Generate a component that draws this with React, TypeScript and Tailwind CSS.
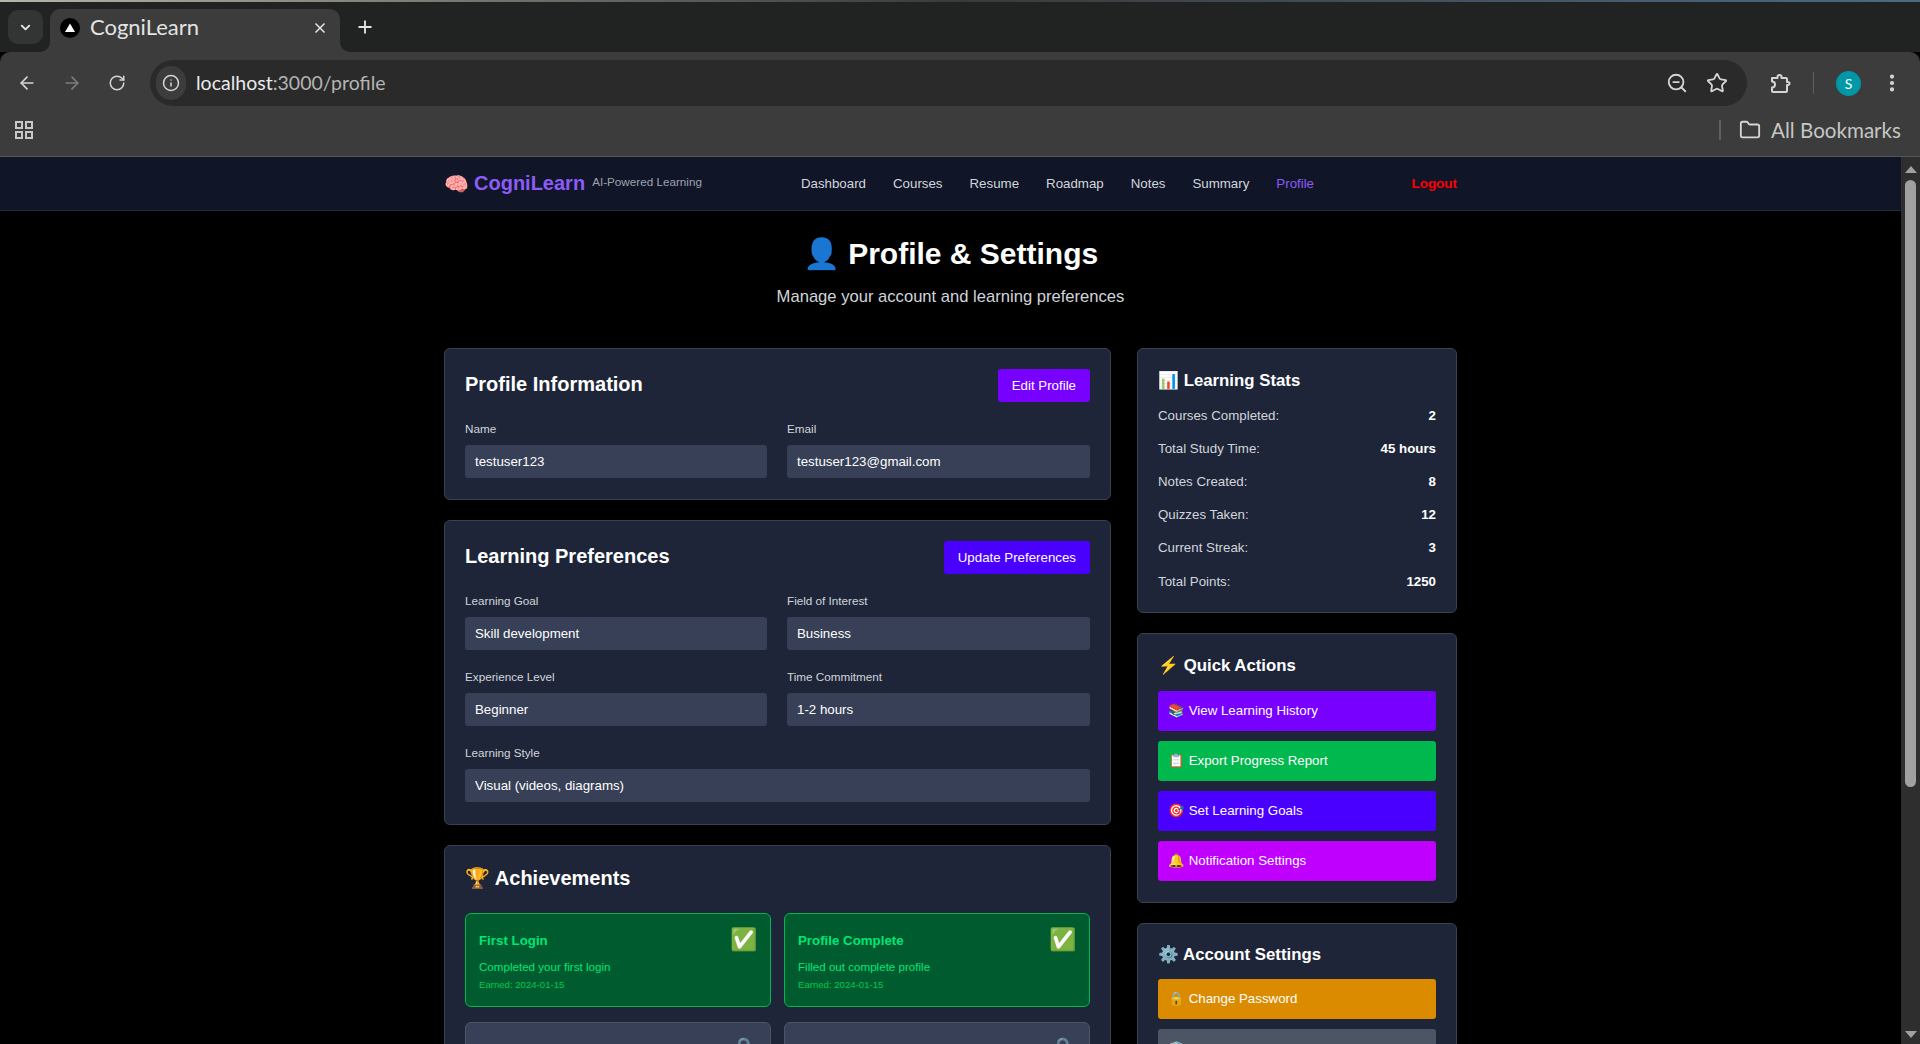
import React from 'react';
import { ArrowLeft, ArrowRight, RotateCw, Info, ZoomOut, Star, MoreVertical, Folder, X, Plus, ChevronDown } from 'lucide-react';

const navLinks = ['Dashboard', 'Courses', 'Resume', 'Roadmap', 'Notes', 'Summary'];

const stats = [
  ['Courses Completed:', '2'],
  ['Total Study Time:', '45 hours'],
  ['Notes Created:', '8'],
  ['Quizzes Taken:', '12'],
  ['Current Streak:', '3'],
  ['Total Points:', '1250'],
];

const Field = ({ label, value }: { label: string; value: string }) => (
  <div>
    <div className="mb-[10px] text-[11.7px] leading-[13px] text-[#d1d5db]">{label}</div>
    <div className="flex h-[33px] items-center rounded-[3px] bg-[#374056] px-[10px] text-[13.3px] text-white">{value}</div>
  </div>
);

const Achievement = ({ title, text, earned }: { title: string; text: string; earned: string }) => (
  <div className="h-[94px] rounded-[6px] border border-[#00b84d] bg-[#005c2e] px-[13px] pt-[13px]">
    <div className="flex items-start justify-between">
      <div className="mt-[4px] text-[13.3px] font-bold text-[#00e676]">{title}</div>
      <span className="mt-[1px] text-[22px] leading-[24px]">✅</span>
    </div>
    <div className="mt-[6px] text-[11.6px] text-[#00e676]">{text}</div>
    <div className="mt-[3px] text-[9.6px] text-[#00c853]">{earned}</div>
  </div>
);

const Locked = ({ title }: { title: string }) => (
  <div className="h-[94px] rounded-[6px] border border-[#4b5563] bg-[#374056] px-[13px] pt-[13px]">
    <div className="flex items-start justify-between">
      <div className="mt-[3px] text-[13.3px] font-bold text-[#9ca3af]">{title}</div>
      <span className="mt-[1px] text-[22px] leading-[24px] opacity-60">🔒</span>
    </div>
  </div>
);

const ActionButton = ({ label, color }: { label: string; color: string }) => (
  <div className={`flex h-[40px] items-center rounded-[3px] px-[10px] text-[13.3px] text-white ${color}`}>{label}</div>
);

const Card = ({ children, className }: { children: React.ReactNode; className?: string }) => (
  <div className={`rounded-[6px] border border-[#374151] bg-[#1e2538] px-[20px] ${className ?? ''}`}>{children}</div>
);

export default function App() {
  return (
    <div className="flex h-[1044px] flex-col overflow-hidden bg-black font-['Liberation_Sans',sans-serif]">
      {/* browser chrome */}
      <div className="h-[2px] bg-gradient-to-r from-[#b5b5a8] via-[#3a3a3a] to-[#4a6a85]" />
      <div className="flex h-[50px] items-start bg-[#202322] pl-[8px]">
        <div className="mt-[8px] flex h-[34px] w-[35px] items-center justify-center rounded-[10px] bg-[#333534] text-[#e5e5e5]">
          <ChevronDown size={15} strokeWidth={3} />
        </div>
        <div className="relative ml-[7px] mt-[7px] flex h-[43px] w-[290px] items-center rounded-t-[10px] bg-[#3c3c3c] pb-[6px] pl-[10px] pr-[12px] text-[#e3e3e3]">
          <svg width="10" height="10" viewBox="0 0 10 10" className="absolute -left-[10px] bottom-0">
            <path d="M10 0 V10 H0 A10 10 0 0 0 10 0 Z" fill="#3c3c3c" />
          </svg>
          <svg width="10" height="10" viewBox="0 0 10 10" className="absolute -right-[10px] bottom-0">
            <path d="M0 0 V10 H10 A10 10 0 0 1 0 0 Z" fill="#3c3c3c" />
          </svg>
          <svg width="20" height="20" viewBox="0 0 20 20" className="mr-[10px] shrink-0">
            <circle cx="10" cy="10" r="10" fill="#000" />
            <path d="M10 5.5 L15 14 H5 Z" fill="#fff" />
          </svg>
          <span className="-mt-[3px] font-['Lato',sans-serif] text-[22px]">CogniLearn</span>
          <X size={16} strokeWidth={2.5} className="ml-auto" />
        </div>
        <Plus size={20} strokeWidth={2.2} className="ml-[15px] mt-[15px] text-[#e3e3e3]" />
      </div>
      <div className="flex h-[62px] items-center rounded-t-[10px] bg-[#3c3c3c] pl-[17px] pr-[17px] text-[#d5d5d5]">
        <ArrowLeft size={20} />
        <ArrowRight size={20} className="ml-[25px] text-[#7c7c7c]" />
        <RotateCw size={18} className="ml-[26px]" />
        <div className="ml-[24px] flex h-[46px] flex-1 items-center rounded-full bg-[#2a2a2a] pl-[6px] pr-[19px]">
          <div className="flex h-[34px] w-[30px] items-center justify-center rounded-full bg-[#3c3c3c]">
            <Info size={18} />
          </div>
          <span className="-mt-[1px] ml-[10px] font-['Lato',sans-serif] text-[19.5px] text-[#e8eaed]">
            localhost<span className="text-[#b4b4b4]">:3000/profile</span>
          </span>
          <ZoomOut size={22} className="ml-auto" />
          <Star size={22} className="ml-[18px]" />
        </div>
        <svg width="24" height="24" viewBox="0 0 24 24" fill="none" stroke="#d5d5d5" strokeWidth="2" strokeLinejoin="round" className="ml-[21px]">
          <path d="M4 7 H9.5 V6 a2 2 0 0 1 4 0 V7 H18 a1 1 0 0 1 1 1 V11 h1 a1.5 1.5 0 0 1 0 3 h-1 V20 a1 1 0 0 1 -1 1 H5 a1 1 0 0 1 -1 -1 V16.5 a3 3 0 0 0 0 -6 Z" />
        </svg>
        <div className="ml-[21px] h-[22px] w-px bg-[#5f5f5f]" />
        <div className="ml-[22px] flex h-[25px] w-[25px] items-center justify-center rounded-full bg-[#0097a7] font-['Lato',sans-serif] text-[14px] text-white">S</div>
        <MoreVertical size={22} strokeWidth={2.6} className="ml-[20px]" />
      </div>
      <div className="flex h-[43px] items-center border-b border-[#555] bg-[#3c3c3c] pb-[10px] pl-[15px] pr-[19px] text-[#d5d5d5]">
        <svg width="18" height="18" viewBox="0 0 18 18" fill="none" stroke="#c8c8c8" strokeWidth="2">
          <rect x="1" y="1" width="6" height="6" />
          <rect x="11" y="1" width="6" height="6" />
          <rect x="1" y="11" width="6" height="6" />
          <rect x="11" y="11" width="6" height="6" />
        </svg>
        <div className="ml-auto h-[20px] w-[2px] bg-[#5f5f5f]" />
        <Folder size={22} className="ml-[18px]" />
        <span className="ml-[10px] font-['Lato',sans-serif] text-[20.6px] text-[#c4c7c5]">All Bookmarks</span>
      </div>

      {/* page */}
      <div className="flex min-h-0 flex-1">
        <div className="min-w-0 flex-1 overflow-hidden">
          <nav className="h-[54px] border-b border-[#1f2937] bg-[#111528]">
            <div className="mx-auto flex h-full w-[1013px] items-center">
              <span className="text-[20px] leading-none">🧠</span>
              <span className="-mt-[1px] ml-[5px] text-[20px] font-bold text-[#8b5cf6]">CogniLearn</span>
              <span className="mb-[3px] ml-[7px] text-[11.7px] text-[#9ca3af]">AI-Powered Learning</span>
              <div className="ml-[99px] mt-[1px] flex gap-[27px] text-[13.3px] text-[#d1d5db]">
                {navLinks.map((l) => (
                  <span key={l}>{l}</span>
                ))}
                <span className="text-[#8b5cf6]">Profile</span>
              </div>
              <span className="ml-auto mt-[1px] text-[13.44px] font-bold text-[#ff0000]">Logout</span>
            </div>
          </nav>

          <div className="mt-[23px] flex items-center justify-center text-[30px] font-bold leading-[40px] text-white">
            <span>👤 Profile &amp; Settings</span>
          </div>
          <div className="mt-[11px] text-center text-[16.6px] leading-[24px] text-[#d1d5db]">Manage your account and learning preferences</div>

          <div className="mx-auto mt-[39px] flex w-[1013px] gap-[26px]">
            <div className="flex w-[667px] shrink-0 flex-col gap-[20px]">
              <Card className="h-[152px] pt-[20px]">
                <div className="flex items-start justify-between">
                  <h2 className="text-[20px] font-bold text-white">Profile Information</h2>
                  <div className="flex h-[33px] items-center rounded-[3px] bg-[#7700ff] px-[14px] text-[13.3px] text-white">Edit Profile</div>
                </div>
                <div className="mt-[20px] grid grid-cols-[302px_1fr] gap-[20px]">
                  <Field label="Name" value="testuser123" />
                  <Field label="Email" value="testuser123@gmail.com" />
                </div>
              </Card>

              <Card className="h-[305px] pt-[20px]">
                <div className="flex items-start justify-between">
                  <h2 className="text-[20px] font-bold text-white">Learning Preferences</h2>
                  <div className="flex h-[33px] items-center rounded-[3px] bg-[#4a00ff] px-[14px] text-[13.3px] text-white">Update Preferences</div>
                </div>
                <div className="mt-[20px] grid grid-cols-[302px_1fr] gap-x-[20px] gap-y-[20px]">
                  <Field label="Learning Goal" value="Skill development" />
                  <Field label="Field of Interest" value="Business" />
                  <Field label="Experience Level" value="Beginner" />
                  <Field label="Time Commitment" value="1-2 hours" />
                  <div className="col-span-2">
                    <Field label="Learning Style" value="Visual (videos, diagrams)" />
                  </div>
                </div>
              </Card>

              <Card className="h-[400px] pt-[21px]">
                <h2 className="text-[20px] font-bold leading-[23px] text-white">🏆 Achievements</h2>
                <div className="mt-[23px] grid grid-cols-2 gap-x-[13px] gap-y-[15px]">
                  <Achievement title="First Login" text="Completed your first login" earned="Earned: 2024-01-15" />
                  <Achievement title="Profile Complete" text="Filled out complete profile" earned="Earned: 2024-01-15" />
                  <Locked title="First Course" />
                  <Locked title="Knowledge Seeker" />
                </div>
              </Card>
            </div>

            <div className="flex w-[320px] shrink-0 flex-col gap-[20px]">
              <Card className="h-[265px] pt-[21px]">
                <h3 className="text-[16.8px] font-bold leading-[22px] text-white">📊 Learning Stats</h3>
                <div className="mt-[7px] flex flex-col">
                  {stats.map(([k, v]) => (
                    <div key={k} className="flex h-[33.2px] items-center justify-between text-[13.3px]">
                      <span className="text-[#d1d5db]">{k}</span>
                      <span className="font-bold text-white">{v}</span>
                    </div>
                  ))}
                </div>
              </Card>
              <Card className="h-[270px] pt-[21px]">
                <h3 className="text-[16.8px] font-bold leading-[22px] text-white">⚡ Quick Actions</h3>
                <div className="mt-[14px] flex flex-col gap-[10px]">
                  <ActionButton label="📚 View Learning History" color="bg-[#7700ff]" />
                  <ActionButton label="📋 Export Progress Report" color="bg-[#00b84d]" />
                  <ActionButton label="🎯 Set Learning Goals" color="bg-[#4a00ff]" />
                  <ActionButton label="🔔 Notification Settings" color="bg-[#bf00ff]" />
                </div>
              </Card>
              <Card className="h-[300px] pt-[20px]">
                <h3 className="text-[16.8px] font-bold leading-[22px] text-white">⚙️ Account Settings</h3>
                <div className="mt-[13px] flex flex-col gap-[10px]">
                  <ActionButton label="🔒 Change Password" color="bg-[#db8b00]" />
                  <ActionButton label="🛡️ Privacy Settings" color="bg-[#4b5563]" />
                </div>
              </Card>
            </div>
          </div>
        </div>

        {/* scrollbar */}
        <div className="flex w-[19px] shrink-0 flex-col items-center bg-[#2e2e2e]">
          <div className="mt-[9px] h-0 w-0 border-x-[6px] border-b-[7px] border-x-transparent border-b-[#a0a0a0]" />
          <div className="mt-[7px] h-[607px] w-[11px] rounded-full bg-[#a0a0a0]" />
          <div className="mb-[6px] mt-auto h-0 w-0 border-x-[6px] border-t-[7px] border-x-transparent border-t-[#a0a0a0]" />
        </div>
      </div>
    </div>
  );
}
